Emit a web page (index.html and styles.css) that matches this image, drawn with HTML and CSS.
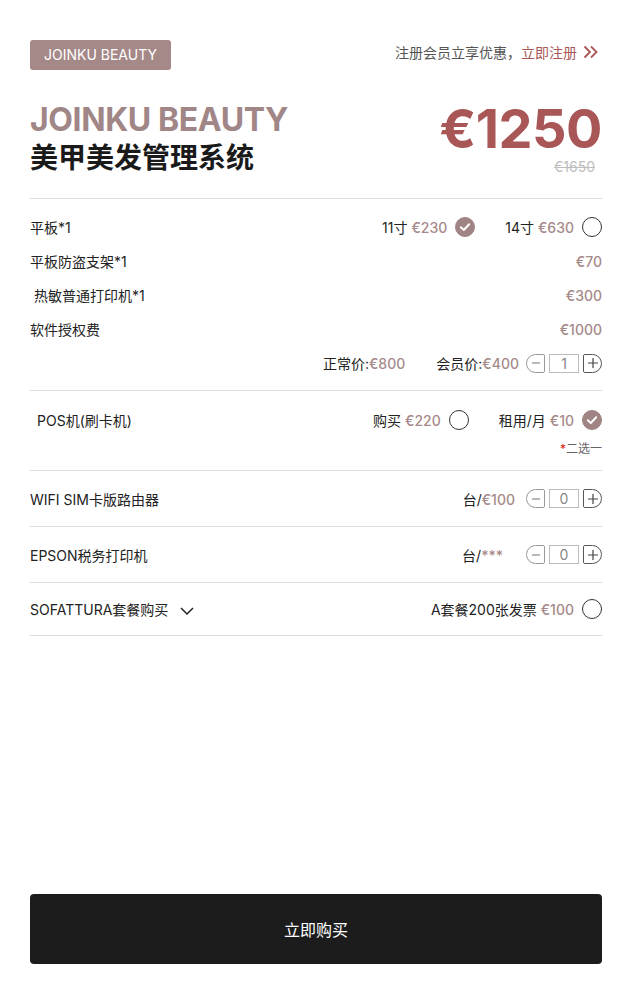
FILE: index.html
```html
<!DOCTYPE html>
<html lang="zh">
<head>
<meta charset="utf-8">
<title>JOINKU BEAUTY</title>
<link rel="stylesheet" href="styles.css">
</head>
<body>
<div class="page">
  <header class="top">
    <span class="tag">JOINKU BEAUTY</span>
    <a class="register">注册会员立享优惠，<span class="reg-link">立即注册</span>
      <svg class="dbl" width="15" height="14" viewBox="0 0 15 14"><path d="M1.5 1.5 L7 7 L1.5 12.5 M8 1.5 L13.5 7 L8 12.5" fill="none" stroke="#a85656" stroke-width="1.8"/></svg>
    </a>
  </header>

  <section class="hero">
    <div class="titles">
      <div class="brand">JOINKU BEAUTY</div>
      <div class="product">美甲美发管理系统</div>
    </div>
    <div class="prices">
      <div class="price">€1250</div>
      <div class="old">€1650</div>
    </div>
  </section>

  <section class="block first">
    <div class="row">
      <span class="label">平板*1</span>
      <div class="opts">
        <span class="opt">11寸 <em>€230</em><span class="check on"><svg width="20" height="20" viewBox="0 0 20 20"><path d="M5.8 10.2 L8.8 13 L14.2 7.2" fill="none" stroke="#fff" stroke-width="2" stroke-linecap="round" stroke-linejoin="round"/></svg></span></span>
        <span class="opt">14寸 <em>€630</em><span class="check"></span></span>
      </div>
    </div>
    <div class="row"><span class="label">平板防盗支架*1</span><em>€70</em></div>
    <div class="row"><span class="label ind">热敏普通打印机*1</span><em>€300</em></div>
    <div class="row"><span class="label">软件授权费</span><em>€1000</em></div>
    <div class="row end">
      <span class="pair">正常价:<em>€800</em></span>
      <span class="pair">会员价:<em>€400</em></span>
      <div class="stepper">
        <span class="minus"><svg width="10" height="10" viewBox="0 0 10 10"><path d="M1 5 H9" stroke="#888" stroke-width="1.2"/></svg></span>
        <span class="qty">1</span>
        <span class="plus"><svg width="12" height="12" viewBox="0 0 12 12"><path d="M1 6 H11 M6 1 V11" stroke="#444" stroke-width="1.2"/></svg></span>
      </div>
    </div>
  </section>

  <section class="block pos">
    <div class="row">
      <span class="label ind2">POS机(刷卡机)</span>
      <div class="opts">
        <span class="opt">购买 <em>€220</em><span class="check"></span></span>
        <span class="opt">租用/月 <em>€10</em><span class="check on"><svg width="20" height="20" viewBox="0 0 20 20"><path d="M5.8 10.2 L8.8 13 L14.2 7.2" fill="none" stroke="#fff" stroke-width="2" stroke-linecap="round" stroke-linejoin="round"/></svg></span></span>
      </div>
    </div>
    <div class="note"><span class="star">*</span>二选一</div>
  </section>

  <section class="block single">
    <span class="label">WIFI SIM卡版路由器</span>
    <div class="right">
      <span class="pair">台/<em>€100</em></span>
      <div class="stepper">
        <span class="minus"><svg width="10" height="10" viewBox="0 0 10 10"><path d="M1 5 H9" stroke="#888" stroke-width="1.2"/></svg></span>
        <span class="qty">0</span>
        <span class="plus"><svg width="12" height="12" viewBox="0 0 12 12"><path d="M1 6 H11 M6 1 V11" stroke="#444" stroke-width="1.2"/></svg></span>
      </div>
    </div>
  </section>

  <section class="block single">
    <span class="label">EPSON税务打印机</span>
    <div class="right">
      <span class="pair stars">台/<em>***</em></span>
      <div class="stepper">
        <span class="minus"><svg width="10" height="10" viewBox="0 0 10 10"><path d="M1 5 H9" stroke="#888" stroke-width="1.2"/></svg></span>
        <span class="qty">0</span>
        <span class="plus"><svg width="12" height="12" viewBox="0 0 12 12"><path d="M1 6 H11 M6 1 V11" stroke="#444" stroke-width="1.2"/></svg></span>
      </div>
    </div>
  </section>

  <section class="block single last">
    <span class="label">SOFATTURA套餐购买
      <svg class="down" width="16" height="10" viewBox="0 0 16 10"><path d="M2 2 L8 8 L14 2" fill="none" stroke="#222" stroke-width="1.5"/></svg>
    </span>
    <span class="opt">A套餐200张发票 <em>€100</em><span class="check"></span></span>
  </section>

  <div class="spacer"></div>
  <button class="buy">立即购买</button>
</div>
</body>
</html>
```

FILE: styles.css
```css
* { box-sizing: border-box; }
html, body { margin: 0; padding: 0; background: #fff; }
body {
  font-family: "Inter", "Noto Sans CJK SC", sans-serif;
  color: #222;
  font-size: 14px;
}
em { font-style: normal; color: #a58a8a; font-weight: 500; }

.page {
  min-height: 1004px;
  padding: 40px 30px 40px;
  display: flex;
  flex-direction: column;
}

.top {
  display: flex;
  justify-content: space-between;
  align-items: center;
  height: 30px;
}
.tag {
  background: #a58888;
  color: #fff;
  font-size: 14px;
  height: 30px;
  line-height: 30px;
  padding: 0 14px;
  border-radius: 3px;
}
.register {
  color: #555;
  font-size: 14px;
  display: flex;
  align-items: center;
  margin-top: -6px;
}
.reg-link { color: #a85656; }
.dbl { margin-left: 6px; margin-right: 4px; }

.hero {
  display: flex;
  justify-content: space-between;
  margin-top: 30px;
  padding-bottom: 22px;
  border-bottom: 1px solid #dcdcdc;
}
.brand {
  font-size: 32px;
  font-weight: 700;
  color: #a08686;
  line-height: 40px;
  letter-spacing: -0.4px;
}
.product {
  font-size: 28px;
  font-weight: 700;
  color: #1a1a1a;
  line-height: 36px;
  margin-top: 0;
}
.prices { text-align: right; }
.price {
  font-size: 54px;
  font-weight: 700;
  color: #a85656;
  line-height: 54px;
  margin-top: 2px;
  letter-spacing: -0.5px;
}
.old {
  font-size: 14px;
  color: #bdbdbd;
  text-decoration: line-through;
  line-height: 18px;
  margin-top: 2px;
  padding-right: 7px;
}

.block { border-bottom: 1px solid #dcdcdc; }
.block.first { padding: 11px 0 10px; }
.block.pos { padding: 12px 0 13px; }

.row {
  height: 34px;
  display: flex;
  align-items: center;
  justify-content: space-between;
}
.row.end { justify-content: flex-end; }
.label.ind { padding-left: 4px; }
.label.ind2 { padding-left: 7px; }

.opts { display: flex; align-items: center; gap: 30px; }
.opt { display: flex; align-items: center; white-space: pre; }
.opt em { margin-right: 8px; }

.check {
  width: 20px;
  height: 20px;
  border-radius: 50%;
  border: 1px solid #333;
  display: inline-block;
}
.check.on { background: #a08383; border-color: #a08383; }
.check svg { display: block; margin: -1px; }

.pair { margin-right: 31px; }
.row.end .pair:last-of-type { margin-right: 7px; }

.stepper { display: flex; align-items: center; gap: 4px; }
.stepper span {
  height: 19px;
  display: flex;
  align-items: center;
  justify-content: center;
  font-size: 14px;
  color: #888;
}
.minus {
  width: 19px;
  border: 1px solid #999;
  border-radius: 10px 2px 2px 10px;
}
.qty {
  width: 30px;
  border: 1px solid #bbb;
}
.plus {
  width: 19px;
  border: 1px solid #555;
  border-radius: 2px 10px 10px 2px;
}
.stepper svg { display: block; }

.note {
  text-align: right;
  font-size: 12px;
  line-height: 16px;
  margin-top: 4px;
  color: #666;
}
.star { color: #e01010; }

.block.single {
  height: 56px;
  display: flex;
  align-items: center;
  justify-content: space-between;
}
.block.last { height: 53px; }
.right { display: flex; align-items: center; }
.right .pair { margin-right: 11px; }
.right .pair.stars { margin-right: 23px; }
.down { margin-left: 7px; vertical-align: middle; }

.spacer { flex: 1; }
.buy {
  height: 70px;
  width: 100%;
  background: #1c1c1c;
  color: #fff;
  border: none;
  border-radius: 4px;
  font-family: "Inter", "Noto Sans CJK SC", sans-serif;
  font-size: 16px;
}
```
